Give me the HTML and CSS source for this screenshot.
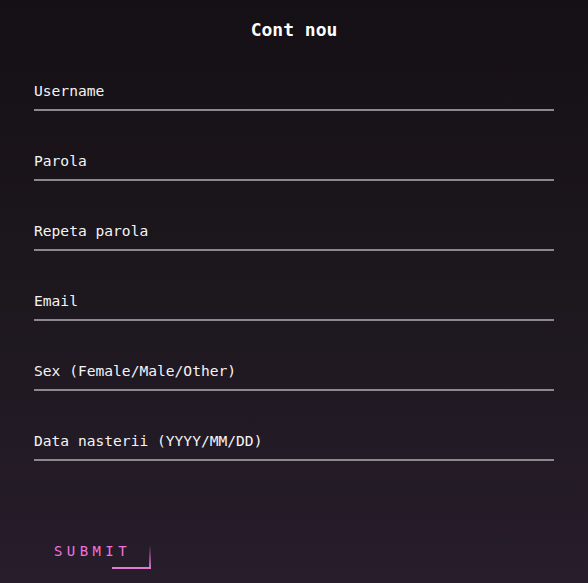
FILE: index.html
```html
<!DOCTYPE html>
<html lang="ro">
<head>
<meta charset="utf-8">
<title>Cont nou</title>
<link rel="stylesheet" href="styles.css">
</head>
<body>
<main class="page">
  <h1 class="title">Cont nou</h1>
  <form class="form">
    <div class="field"><label class="label">Username</label><div class="line"></div></div>
    <div class="field"><label class="label">Parola</label><div class="line"></div></div>
    <div class="field"><label class="label">Repeta parola</label><div class="line"></div></div>
    <div class="field"><label class="label">Email</label><div class="line"></div></div>
    <div class="field"><label class="label">Sex (Female/Male/Other)</label><div class="line"></div></div>
    <div class="field"><label class="label">Data nasterii (YYYY/MM/DD)</label><div class="line"></div></div>
    <div class="actions"><button type="button" class="submit">SUBMIT</button></div>
  </form>
</main>
</body>
</html>
```

FILE: styles.css
```css
html, body {
  margin: 0;
  padding: 0;
}
body {
  width: 588px;
  height: 583px;
  overflow: hidden;
  background: linear-gradient(180deg, #151015 0%, #1d171e 50%, #271d2b 100%);
  font-family: "DejaVu Sans Mono", "Liberation Mono", monospace;
  color: #ffffff;
}
.page {
  padding: 19px 34px 0;
}
.title {
  margin: 0;
  font-size: 18px;
  line-height: 22px;
  font-weight: bold;
  text-align: center;
  color: #ffffff;
}
.form {
  display: flex;
  flex-direction: column;
  gap: 41px;
  margin-top: 41px;
}
.field {
  display: flex;
  flex-direction: column;
  gap: 9px;
}
.label {
  font-size: 14.6px;
  line-height: 18px;
  color: #f4f4f4;
}
.line {
  height: 2px;
  background: #8b898c;
}
.actions {
  margin-top: 31px;
}
.submit {
  position: relative;
  background: transparent;
  border: 0;
  padding: 9px 20px;
  font-family: "DejaVu Sans Mono", "Liberation Mono", monospace;
  font-size: 14px;
  line-height: 18px;
  letter-spacing: 4.4px;
  color: #f072de;
  cursor: pointer;
}
.submit::before {
  content: "";
  position: absolute;
  right: 0;
  bottom: 0;
  width: 2px;
  height: 24px;
  background: linear-gradient(180deg, rgba(230, 110, 210, 0) 0%, #e173d0 100%);
}
.submit::after {
  content: "";
  position: absolute;
  right: 0;
  bottom: 0;
  width: 39px;
  height: 2px;
  background: #e37ad2;
}
```
